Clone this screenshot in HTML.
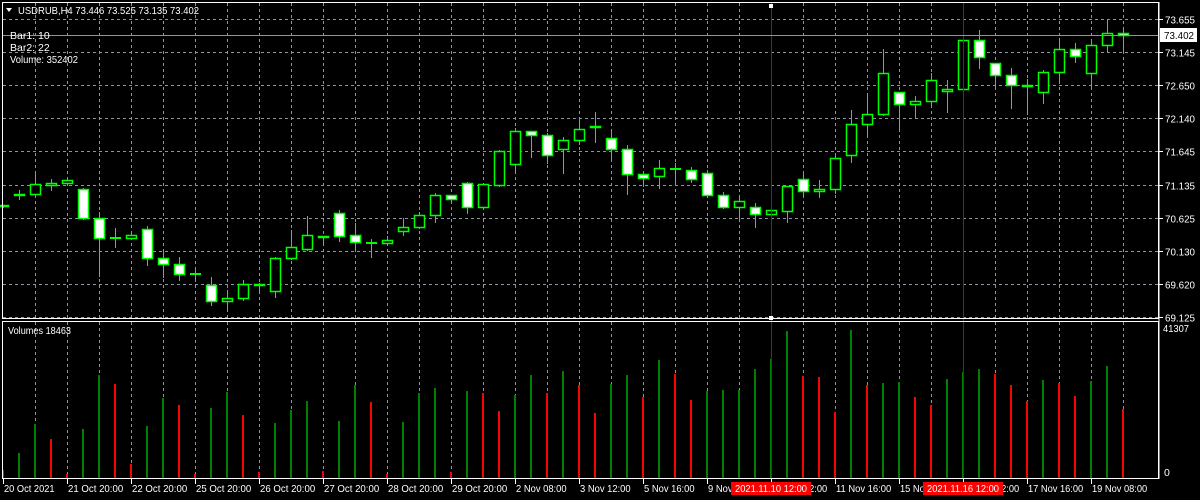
<!DOCTYPE html>
<html><head><meta charset="utf-8"><style>
html,body{margin:0;padding:0;background:#000;width:1200px;height:500px;overflow:hidden}
svg{display:block}
text{font-family:"Liberation Sans",sans-serif;font-size:10.5px;fill:#fff}
</style></head><body>
<svg id="s" width="1200" height="500" xmlns="http://www.w3.org/2000/svg">
<rect width="1200" height="500" fill="#000"/>
<g id="grid"></g>
<g id="vol"></g>
<g id="cand"></g>
<line x1="771.5" y1="3" x2="771.5" y2="479" stroke="#c00000"/>
<line x1="963.5" y1="3" x2="963.5" y2="479" stroke="#c00000"/>
<rect x="769" y="4" width="4" height="4" fill="#fff"/>
<rect x="769" y="316" width="4" height="4" fill="#fff"/>
<line x1="3" y1="35.5" x2="1159" y2="35.5" stroke="#8a96a6"/>
<rect x="2.5" y="2.5" width="1156" height="316" fill="none" stroke="#fff"/>
<rect x="2.5" y="321.5" width="1156" height="157" fill="none" stroke="#fff"/>
<line x1="1159" y1="2" x2="1159" y2="479" stroke="#fff"/>
<g id="axis"></g>
<rect x="1160" y="28" width="37" height="14" fill="#fff"/>
<text x="1164" y="39" style="fill:#000" textLength="30" lengthAdjust="spacingAndGlyphs">73.402</text>
<polygon points="6,8 12,8 9,12" fill="#fff"/>
<text x="18" y="14" textLength="181" lengthAdjust="spacingAndGlyphs">USDRUB,H4  73.446 73.525 73.135 73.402</text>
<text x="10" y="39">Bar1: 10</text>
<text x="10" y="51">Bar2: 22</text>
<text x="10" y="63" textLength="68" lengthAdjust="spacingAndGlyphs">Volume: 352402</text>
<text x="8" y="334" textLength="63" lengthAdjust="spacingAndGlyphs">Volumes 18463</text>
<text x="1163" y="332" textLength="26" lengthAdjust="spacingAndGlyphs">41307</text>
<text x="1164" y="476">0</text>
</svg>
<script>
var NS="http://www.w3.org/2000/svg";
function el(p,t,a,txt){var e=document.createElementNS(NS,t);for(var k in a)e.setAttribute(k,a[k]);if(txt!=null)e.textContent=txt;document.getElementById(p).appendChild(e);return e;}
var G="#8a96a6";
var prices=["73.655","73.145","72.650","72.140","71.645","71.135","70.625","70.130","69.620","69.125"];
for(var i=0;i<10;i++){var y=Math.round(19+i*33.1)+0.5;
 el("grid","line",{x1:3,y1:y,x2:1159,y2:y,stroke:G,"stroke-dasharray":"3,3"});
 el("axis","line",{x1:1159,y1:y,x2:1163,y2:y,stroke:"#fff"});
 el("axis","text",{x:1165,y:y+4,textLength:30,lengthAdjust:"spacingAndGlyphs"},prices[i]);}
el("grid","line",{x1:3,y1:478.5,x2:1159,y2:478.5,stroke:G,"stroke-dasharray":"3,3"});
for(var x=35;x<=1123;x+=32){
 el("grid","line",{x1:x+.5,y1:3,x2:x+.5,y2:318,stroke:G,"stroke-dasharray":"3,3"});
 el("grid","line",{x1:x+.5,y1:322,x2:x+.5,y2:478,stroke:G,"stroke-dasharray":"3,3"});}
var labs=["20 Oct 2021","21 Oct 20:00","22 Oct 20:00","25 Oct 20:00","26 Oct 20:00","27 Oct 20:00","28 Oct 20:00","29 Oct 20:00","2 Nov 08:00","3 Nov 12:00","5 Nov 16:00","9 Nov 08:00","10 Nov 12:00","11 Nov 16:00","15 Nov 08:00","16 Nov 12:00","17 Nov 16:00","19 Nov 08:00"];
for(var i=0;i<labs.length;i++){var x=3+64*i;
 el("axis","line",{x1:x+.5,y1:479,x2:x+.5,y2:484,stroke:"#fff"});
 var t=labs[i];
 var w=t.length*4.6;
 el("axis","text",{x:x+1,y:492,textLength:w,lengthAdjust:"spacingAndGlyphs"},t);}
[[731,"2021.11.10 12:00"],[923,"2021.11.16 12:00"]].forEach(function(b){
 el("axis","rect",{x:b[0],y:482,width:80,height:13,fill:"#ff0000"});
 el("axis","text",{x:b[0]+4,y:492,textLength:72,lengthAdjust:"spacingAndGlyphs"},b[1]);});
var V=[[470,1],[453,0],[424,0],[439,1],[474,1],[429,0],[375,0],[384,1],[464,1],[426,0],[398,0],[405,1],[474,1],[408,0],[392,0],[415,1],[472,1],[423,0],[410,0],[401,0],[471,1],[421,0],[385,0],[402,1],[474,1],[422,0],[393,0],[388,0],[472,1],[391,0],[393,1],[411,1],[395,0],[375,0],[393,1],[371,0],[385,1],[413,1],[384,0],[375,0],[397,1],[360,0],[374,1],[400,1],[391,0],[390,0],[390,0],[369,0],[359,0],[331,0],[376,1],[377,1],[412,1],[330,0],[385,1],[383,0],[382,0],[397,1],[405,1],[379,0],[372,0],[369,0],[374,1],[385,1],[401,1],[380,0],[383,1],[396,1],[381,0],[366,0],[409,1]];
V.forEach(function(v,i){var x=3+16*i;el("vol","rect",{x:x-1,y:v[0],width:2,height:478-v[0],fill:v[1]?"#ff0000":"#008000"});});
var C=[[205,205,206,207,0],[190,194,195,199,0],[174,184,194,196,0],[179,183,185,190,0],[180,180,183,183,0],[188,189,218,219,1],[212,218,238,276,1],[228,238,238,247,0],[234,235,238,238,0],[226,229,258,265,1],[252,258,264,277,1],[257,264,274,280,1],[268,274,274,281,0],[277,285,301,305,1],[290,298,301,310,0],[280,284,298,300,0],[283,284,285,290,0],[257,258,291,297,0],[230,247,258,259,0],[216,235,249,250,0],[236,236,237,243,0],[210,213,236,241,1],[223,235,242,250,1],[239,243,243,257,0],[236,240,243,245,0],[218,227,231,235,0],[212,215,227,228,0],[193,195,215,222,0],[195,195,199,202,1],[182,183,207,213,1],[184,184,207,209,0],[150,151,185,186,0],[128,131,164,172,0],[131,131,135,157,1],[133,135,155,163,1],[137,140,149,173,0],[118,129,140,144,0],[112,126,127,142,0],[131,138,149,161,1],[145,149,174,194,1],[174,174,178,186,1],[160,168,176,188,0],[163,169,169,183,1],[167,170,179,182,1],[170,173,195,197,1],[192,195,207,208,1],[195,201,207,220,0],[203,207,214,227,1],[210,210,214,214,0],[186,186,211,222,0],[174,179,191,197,1],[180,189,191,197,0],[153,158,189,193,0],[110,124,155,162,0],[96,114,124,134,0],[49,73,114,115,0],[92,92,104,130,1],[96,101,104,118,0],[73,80,101,107,0],[80,89,91,112,0],[40,40,89,90,0],[30,40,57,68,1],[63,63,75,87,1],[68,75,85,108,1],[79,85,86,114,0],[70,72,92,103,0],[38,49,72,82,0],[43,49,56,62,1],[42,45,73,87,0],[19,33,45,51,0],[27,33,35,53,1]];
var GR="#00ff00";
C.forEach(function(c,i){var x=3+16*i+.5;
 el("cand","line",{x1:x,y1:c[0],x2:x,y2:c[3]+1,stroke:GR});
 if(c[2]-c[1]<1){el("cand","rect",{x:x-5.5,y:c[1]-1,width:11,height:2,fill:GR});}
 else el("cand","rect",{x:x-5,y:c[1]+.5,width:10,height:c[2]-c[1],fill:c[4]?"#fff":"#000",stroke:GR,"stroke-width":1.5});});
</script>
</body></html>
